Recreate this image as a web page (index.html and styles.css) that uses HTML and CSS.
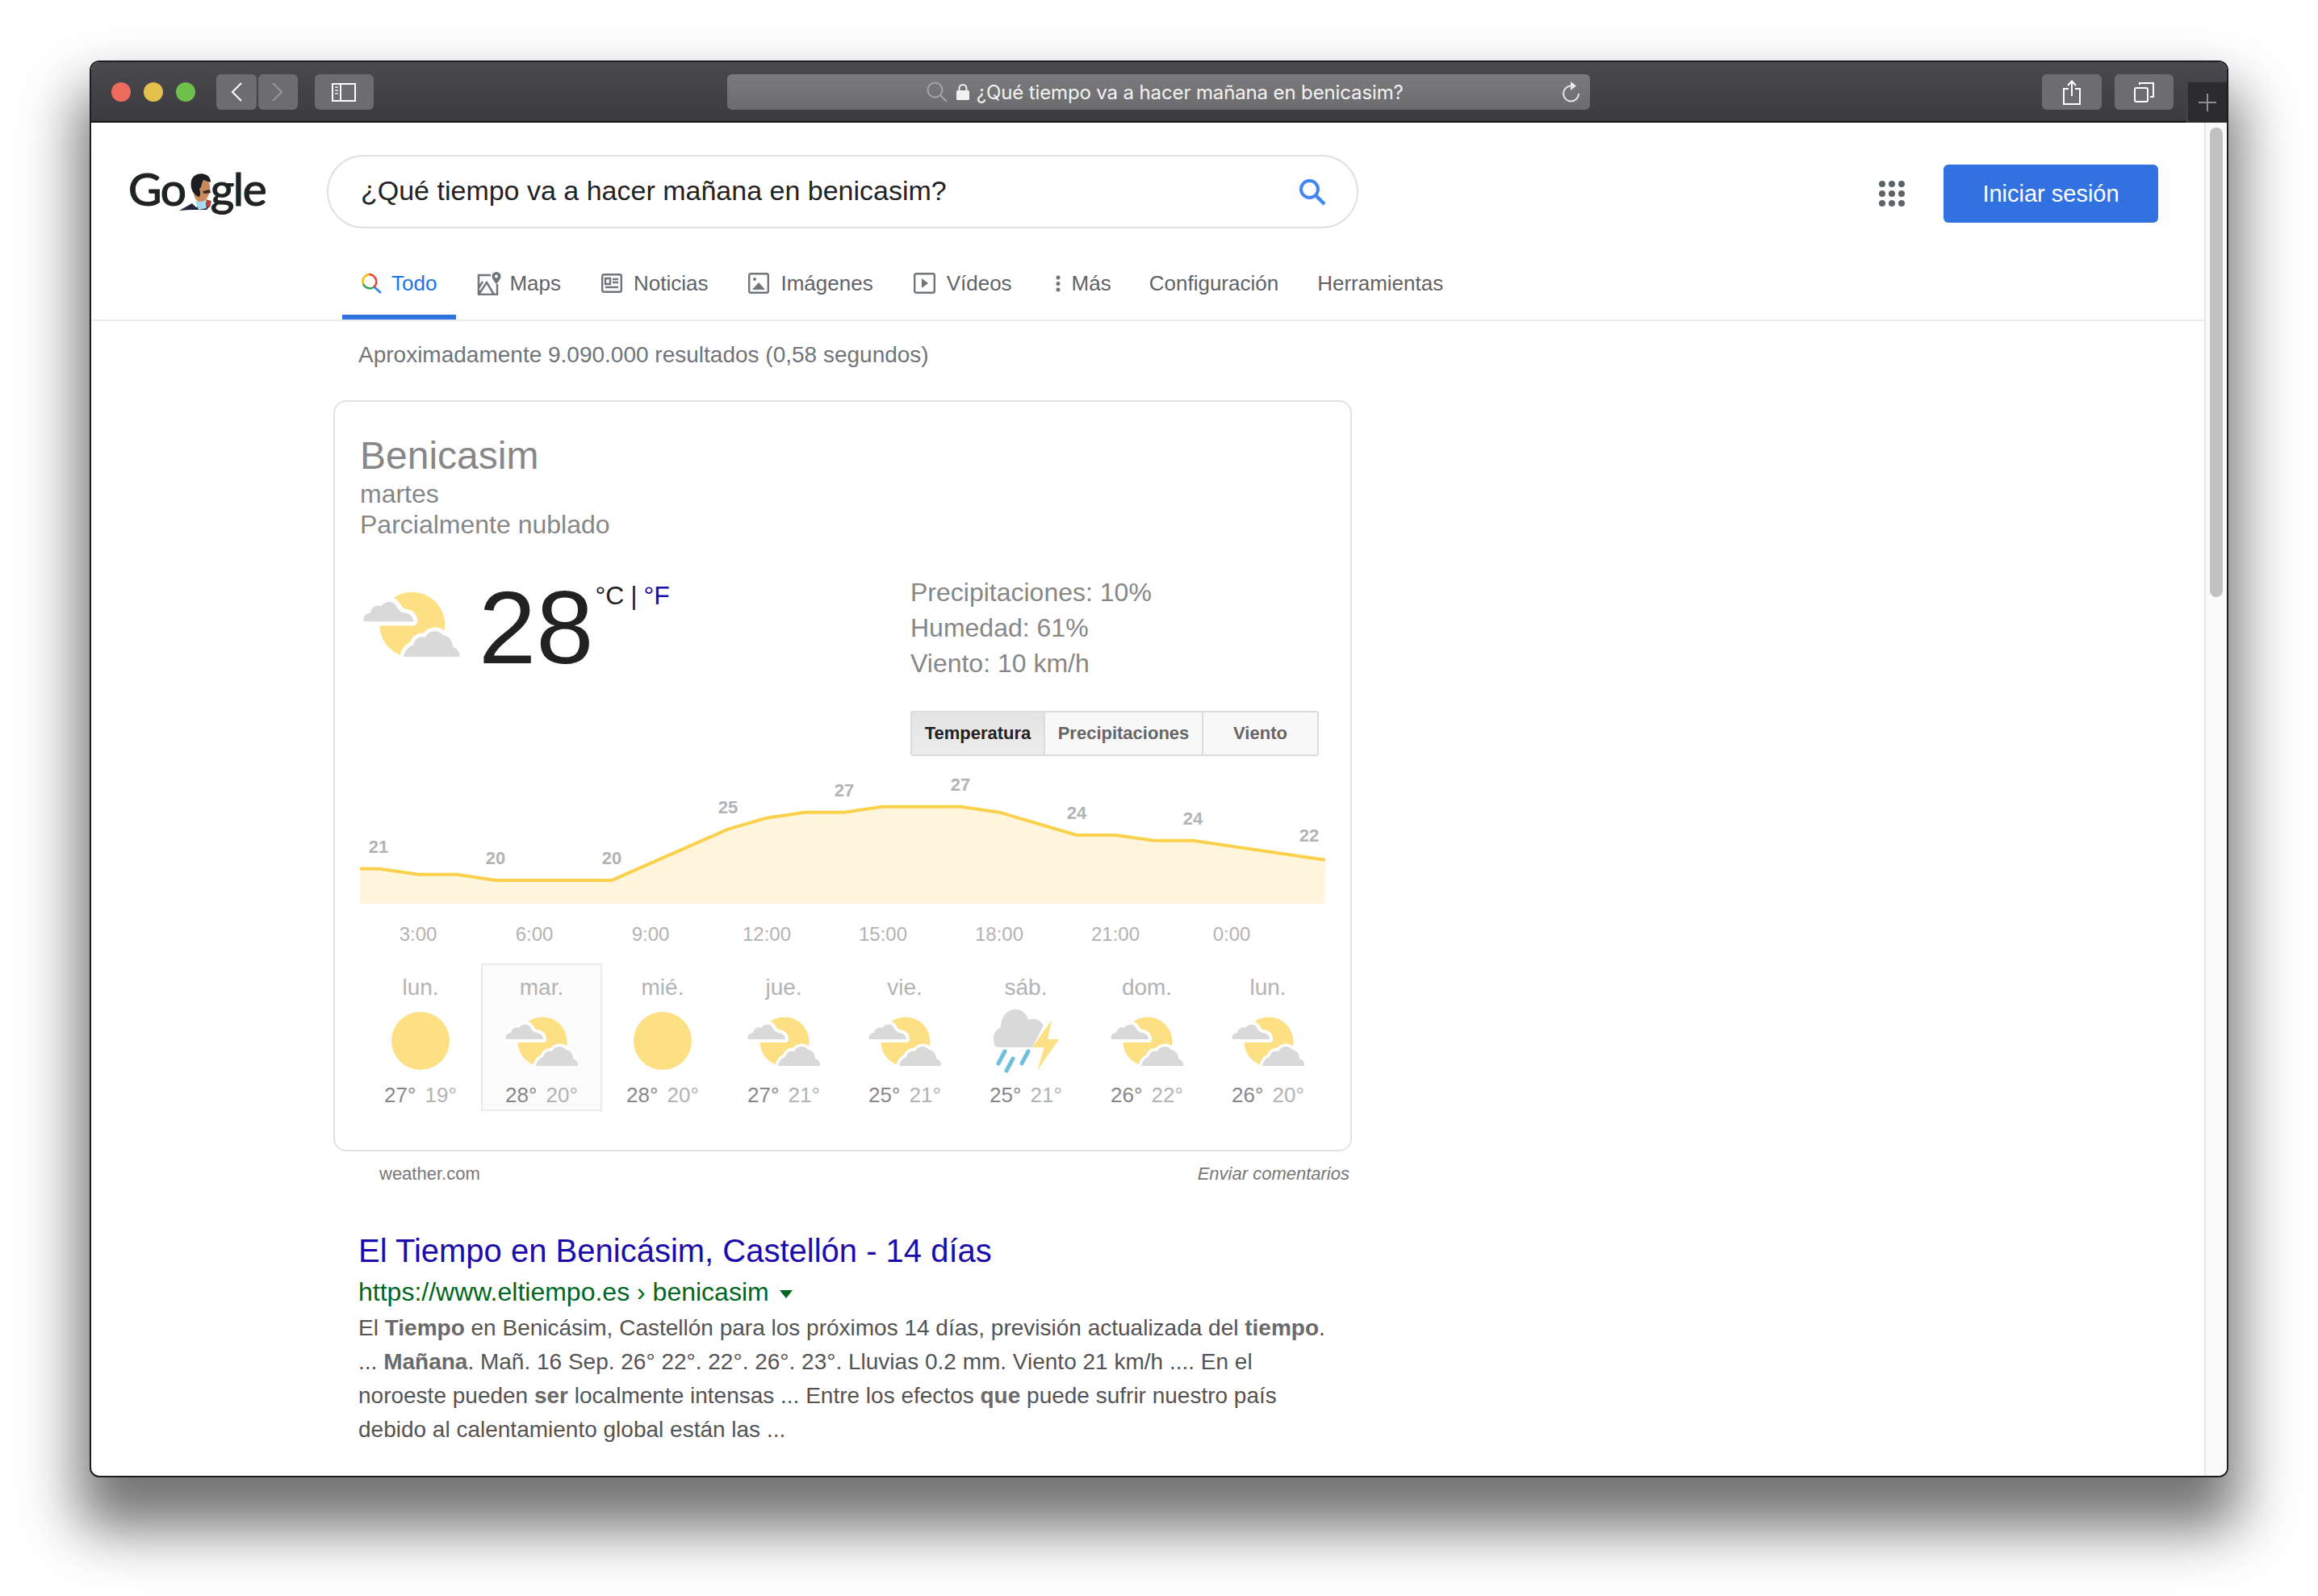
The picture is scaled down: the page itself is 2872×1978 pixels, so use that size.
FILE: index.html
```html
<!DOCTYPE html>
<html lang="es">
<head>
    <meta charset="UTF-8">
    <title>¿Qué tiempo va a hacer mañana en benicasim?</title>
    <link rel="stylesheet" href="styles.css">
</head>
<body>
    <svg class="defs" width="0" height="0">
        <symbol id="partly" viewBox="0 0 91 61">
            <circle cx="46" cy="31" r="30.5" fill="#fce083"/>
            <path d="M1 28C-1 24 3 20 7 20C8 14 14 12 17 14C20 9 28 8 31 13C33 17 35 19 38 20C43 20 47 23 47 28Z" fill="#d9d9d9" stroke="#fff" stroke-width="8" stroke-linejoin="round" paint-order="stroke"/>
            <path d="M38 61C39 55 43 51 47 50C48 44 54 41 58 43C61 36 71 35 75 41C80 41 84 46 84 52C88 53 91 57 90 61Z" fill="#d9d9d9" stroke="#fff" stroke-width="7" stroke-linejoin="round" paint-order="stroke"/>
        </symbol>
        <symbol id="storm" viewBox="0 0 81 79">
            <path d="M6 47C1 47 0 42 0 36C0 29 4 24 9 23C8 10 17 0 27 0C36 0 41 6 43 13C50 10 58 12 62 20L48 47Z" fill="#d9d9d9"/>
            <path d="M72 13L48 47H63L54 76L81 37H67Z" fill="#fce083"/>
            <path d="M14 52L6 67M24 61L16 76M43 52L35 67" stroke="#6cbfdc" stroke-width="5" stroke-linecap="round"/>
        </symbol>
    </svg>

    <div class="window">
        <div class="toolbar">
            <div class="lights">
                <span class="light red"></span>
                <span class="light yellow"></span>
                <span class="light green"></span>
            </div>
            <div class="tool back">
                <svg width="14" height="24" viewBox="0 0 14 24"><path d="M13 1L2 12L13 23" fill="none" stroke="#fff" stroke-width="2"/></svg>
            </div>
            <div class="tool forward">
                <svg width="14" height="24" viewBox="0 0 14 24"><path d="M1 1L12 12L1 23" fill="none" stroke="#98989c" stroke-width="2"/></svg>
            </div>
            <div class="tool sidebar">
                <svg width="30" height="23" viewBox="0 0 30 23"><path d="M1 1H29V22H1ZM11 1V22" fill="none" stroke="#fff" stroke-width="2"/><path d="M4 5H8M4 9H8M4 13H8" stroke="#cfcfcf" stroke-width="2"/></svg>
            </div>
            <div class="address">
                <svg width="26" height="26" viewBox="0 0 26 26"><circle cx="10.5" cy="10.5" r="9" fill="none" stroke="#a6a6a8" stroke-width="2"/><path d="M17 17L25 25" stroke="#a6a6a8" stroke-width="2"/></svg>
                <svg class="lock" width="16" height="20" viewBox="0 0 16 20"><path d="M3.5 9V5.5a4.5 4.5 0 0 1 9 0V9" fill="none" stroke="#f2f2f2" stroke-width="2"/><rect y="8" width="16" height="12" rx="1.5" fill="#f2f2f2"/></svg>
                <span class="address-text">¿Qué tiempo va a hacer mañana en benicasim?</span>
                <svg class="reload" width="24" height="28" viewBox="0 0 24 28"><path d="M11 6.500A9.500 9.500 0 1 0 21 16" fill="none" stroke="#e8e8e8" stroke-width="2"/><path d="M11 1L18 6.500L11 12Z" fill="#e8e8e8"/></svg>
            </div>
            <div class="tool share">
                <svg width="22" height="31" viewBox="0 0 22 31"><path d="M7 11H1V30H21V11H15" fill="none" stroke="#fff" stroke-width="2"/><path d="M11 20V2M6 7L11 1.500L16 7" fill="none" stroke="#fff" stroke-width="2"/></svg>
            </div>
            <div class="tool tabs-btn">
                <svg width="25" height="25" viewBox="0 0 25 25"><rect x="1" y="7" width="16" height="17" rx="2" fill="none" stroke="#fff" stroke-width="2"/><path d="M7 3V1H24V18H20" fill="none" stroke="#fff" stroke-width="2"/></svg>
            </div>
            <div class="new-tab">
                <svg width="22" height="22" viewBox="0 0 22 22"><path d="M11 0V22M0 11H22" stroke="#8f8f91" stroke-width="2"/></svg>
            </div>
        </div>

        <div class="viewport">
            <div class="page">
                <div class="header">
                    <div class="logo">Go<svg class="doodle" width="42" height="52" viewBox="0 0 42 52">
                        <path d="M0 47L16 38L21 43L34 37L39 40L34 46L14 46Z" fill="#23243a"/>
                        <path d="M20 36L32 32L34 44L24 46Z" fill="#a5dcec"/>
                        <path d="M33 33L40 35L38 43L34 42Z" fill="#b8413a"/>
                        <path d="M18 14C18 6 26 3 32 6C37 9 39 16 38 22C37 30 32 37 25 36C20 35 19 30 18 26Z" fill="#c88a5c"/>
                        <path d="M25 30C18 28 13 20 15 10C17 2 27 -1 34 3C38 5 39 9 39 12L30 9C27 14 28 18 25 20C26 24 27 27 25 30Z" fill="#1d1d24"/>
                        <path d="M29 23L38 21L39 25L31 26Z" fill="#3a2a24"/>
                    </svg>gle</div>
                    <div class="search-box">
                        <span class="search-text">¿Qué tiempo va a hacer mañana en benicasim?</span>
                        <svg width="34" height="34" viewBox="0 0 34 34"><circle cx="13.500" cy="13.500" r="10.500" fill="none" stroke="#4285f4" stroke-width="4"/><path d="M21 21L32 32" stroke="#4285f4" stroke-width="4.500"/></svg>
                    </div>
                    <div class="apps">
                        <i></i><i></i><i></i><i></i><i></i><i></i><i></i><i></i><i></i>
                    </div>
                    <div class="login">Iniciar sesión</div>
                </div>

                <div class="nav">
                    <div class="nav-item active">
                        <svg width="26" height="26" viewBox="0 0 26 26">
                            <path d="M3 14A9 9 0 0 1 10 2" fill="none" stroke="#fbbc05" stroke-width="2.500"/>
                            <path d="M10 2A9 9 0 0 1 19 9" fill="none" stroke="#ea4335" stroke-width="2.500"/>
                            <path d="M3 14A9 9 0 0 0 16 18" fill="none" stroke="#34a853" stroke-width="2.500"/>
                            <path d="M16 17L25 25" stroke="#4285f4" stroke-width="3"/>
                            <path d="M19 9A9 9 0 0 1 16 18" fill="none" stroke="#ea4335" stroke-width="2.500"/>
                        </svg>
                        Todo
                    </div>
                    <div class="nav-item maps">
                        <svg width="30" height="29" viewBox="0 0 30 29"><path d="M17 4H2V28H25V15M2 28L12 13L21 28M2 20L7 12" fill="none" stroke="#70757a" stroke-width="2.500"/><path d="M24 0a5.500 5.500 0 0 1 5.500 5.500C29.500 9 24 15 24 15S18.500 9 18.500 5.500A5.500 5.500 0 0 1 24 0Z" fill="#70757a"/><circle cx="24" cy="5.500" r="2" fill="#fff"/></svg>
                        Maps
                    </div>
                    <div class="nav-item">
                        <svg width="26" height="24" viewBox="0 0 26 24"><rect x="1.200" y="1.200" width="23.600" height="21.600" rx="2" fill="none" stroke="#70757a" stroke-width="2.400"/><path d="M5 6H11V13H5ZM14 7H21M14 11H21M5 17H21" fill="none" stroke="#70757a" stroke-width="2.400"/></svg>
                        Noticias
                    </div>
                    <div class="nav-item">
                        <svg width="26" height="26" viewBox="0 0 26 26"><rect x="1.200" y="1.200" width="23.600" height="23.600" rx="2" fill="none" stroke="#70757a" stroke-width="2.400"/><circle cx="8" cy="8" r="2" fill="#70757a"/><path d="M5 21L13 12L21 21Z" fill="#70757a"/></svg>
                        Imágenes
                    </div>
                    <div class="nav-item">
                        <svg width="27" height="26" viewBox="0 0 27 26"><rect x="1.200" y="1.200" width="24.600" height="23.600" rx="2" fill="none" stroke="#70757a" stroke-width="2.400"/><path d="M10 7L18 13L10 19Z" fill="#70757a"/></svg>
                        Vídeos
                    </div>
                    <div class="nav-item more">
                        <svg width="6" height="21" viewBox="0 0 6 21"><circle cx="3" cy="3" r="2.500" fill="#70757a"/><circle cx="3" cy="10.500" r="2.500" fill="#70757a"/><circle cx="3" cy="18" r="2.500" fill="#70757a"/></svg>
                        Más
                    </div>
                    <div class="nav-item config">Configuración</div>
                    <div class="nav-item tools">Herramientas</div>
                </div>

                <div class="results">
                    <div class="count">Aproximadamente 9.090.000 resultados (0,58 segundos)</div>

                    <div class="card">
                        <div class="city">Benicasim</div>
                        <div class="sub">martes</div>
                        <div class="sub">Parcialmente nublado</div>

                        <div class="current">
                            <div class="now">
                                <svg class="now-icon" width="122" height="81"><use href="#partly"/></svg>
                                <div class="temp">28</div>
                                <div class="units">°C | <span class="blue">°F</span></div>
                            </div>
                            <div class="details">
                                <div>Precipitaciones: 10%</div>
                                <div>Humedad: 61%</div>
                                <div>Viento: 10 km/h</div>
                            </div>
                        </div>

                        <div class="seg">
                            <div class="seg-btn selected">Temperatura</div>
                            <div class="seg-btn precip">Precipitaciones</div>
                            <div class="seg-btn wind">Viento</div>
                        </div>

                        <svg class="chart" width="1196" height="170" viewBox="0 0 1196 170">
                            <path d="M0 116.700L24 116.700L72 123.700L120 123.700L168 131L312 131L456 67.700L504 53.700L552 46.700L600 46.700L648 39.700L744 39.700L792 46.700L888 75L936 75L984 81.700L1032 81.700L1196 105.700V160H0Z" fill="#fef5dc"/>
                            <path d="M0 116.700L24 116.700L72 123.700L120 123.700L168 131L312 131L456 67.700L504 53.700L552 46.700L600 46.700L648 39.700L744 39.700L792 46.700L888 75L936 75L984 81.700L1032 81.700L1196 105.700" fill="none" stroke="#fbd14b" stroke-width="4"/>
                            <text class="chart-num" x="23" y="97">21</text>
                            <text class="chart-num" x="168" y="111">20</text>
                            <text class="chart-num" x="312" y="111">20</text>
                            <text class="chart-num" x="456" y="48">25</text>
                            <text class="chart-num" x="600" y="27">27</text>
                            <text class="chart-num" x="744" y="20">27</text>
                            <text class="chart-num" x="888" y="55">24</text>
                            <text class="chart-num" x="1032" y="62">24</text>
                            <text class="chart-num" x="1176" y="83">22</text>
                        </svg>

                        <div class="hours">
                            <span>3:00</span><span>6:00</span><span>9:00</span><span>12:00</span><span>15:00</span><span>18:00</span><span>21:00</span><span>0:00</span>
                        </div>

                        <div class="days">
                            <div class="day">
                                <div class="day-name">lun.</div>
                                <div class="day-icon"><div class="sun"></div></div>
                                <div class="day-temp">27° <span class="low">19°</span></div>
                            </div>
                            <div class="day today">
                                <div class="day-name">mar.</div>
                                <div class="day-icon"><svg width="91" height="61"><use href="#partly"/></svg></div>
                                <div class="day-temp">28° <span class="low">20°</span></div>
                            </div>
                            <div class="day">
                                <div class="day-name">mié.</div>
                                <div class="day-icon"><div class="sun"></div></div>
                                <div class="day-temp">28° <span class="low">20°</span></div>
                            </div>
                            <div class="day">
                                <div class="day-name">jue.</div>
                                <div class="day-icon"><svg width="91" height="61"><use href="#partly"/></svg></div>
                                <div class="day-temp">27° <span class="low">21°</span></div>
                            </div>
                            <div class="day">
                                <div class="day-name">vie.</div>
                                <div class="day-icon"><svg width="91" height="61"><use href="#partly"/></svg></div>
                                <div class="day-temp">25° <span class="low">21°</span></div>
                            </div>
                            <div class="day">
                                <div class="day-name">sáb.</div>
                                <div class="day-icon"><svg width="81" height="79"><use href="#storm"/></svg></div>
                                <div class="day-temp">25° <span class="low">21°</span></div>
                            </div>
                            <div class="day">
                                <div class="day-name">dom.</div>
                                <div class="day-icon"><svg width="91" height="61"><use href="#partly"/></svg></div>
                                <div class="day-temp">26° <span class="low">22°</span></div>
                            </div>
                            <div class="day">
                                <div class="day-name">lun.</div>
                                <div class="day-icon"><svg width="91" height="61"><use href="#partly"/></svg></div>
                                <div class="day-temp">26° <span class="low">20°</span></div>
                            </div>
                        </div>
                    </div>

                    <div class="sources">
                        <span>weather.com</span>
                        <em>Enviar comentarios</em>
                    </div>

                    <div class="result">
                        <div class="result-title">El Tiempo en Benicásim, Castellón - 14 días</div>
                        <div class="result-url">https://www.eltiempo.es › benicasim <span class="caret"></span></div>
                        <div class="snippet">
                            El <b>Tiempo</b> en Benicásim, Castellón para los próximos 14 días, previsión actualizada del <b>tiempo</b>.<br>
                            ... <b>Mañana</b>. Mañ. 16 Sep. 26° 22°. 22°. 26°. 23°. Lluvias 0.2 mm. Viento 21 km/h .... En el<br>
                            noroeste pueden <b>ser</b> localmente intensas ... Entre los efectos <b>que</b> puede sufrir nuestro país<br>
                            debido al calentamiento global están las ...
                        </div>
                    </div>
                </div>
            </div>
            <div class="scrollbar"><div class="thumb"></div></div>
        </div>
    </div>
</body>
</html>
```

FILE: styles.css
```css
* {
    box-sizing: border-box;
}
html, body {
    margin: 0;
    height: 100%;
}
body {
    padding: 75px 111px 0;
    background: #fff;
    font-family: "Liberation Sans", Arial, sans-serif;
    overflow: hidden;
}
.defs {
    display: block;
    height: 0;
}
.window {
    width: 2650px;
    height: 1756px;
    display: flex;
    flex-direction: column;
    border: 2px solid #1c1c1e;
    border-radius: 12px;
    overflow: hidden;
    background: #fff;
    box-shadow: 0 50px 70px 14px rgba(0, 0, 0, .55);
}

/* browser chrome */
.toolbar {
    height: 75px;
    flex: none;
    display: flex;
    align-items: flex-start;
    padding: 15px 0 0 25px;
    background: linear-gradient(#4a494e, #3c3b40);
    border-bottom: 2px solid #111;
}
.lights {
    display: flex;
    gap: 16px;
    margin: 10px 26px 0 0;
}
.light {
    width: 24px;
    height: 24px;
    border-radius: 50%;
}
.red { background: #ee6a5e; }
.yellow { background: #e2c04b; }
.green { background: #6fc04b; }
.tool {
    height: 44px;
    display: flex;
    align-items: center;
    justify-content: center;
    background: #6d6c71;
    border-radius: 6px;
}
.back { width: 50px; margin-right: 2px; }
.forward { width: 49px; margin-right: 21px; }
.sidebar { width: 73px; margin-right: 438px; }
.address {
    width: 1070px;
    height: 44px;
    display: flex;
    align-items: center;
    padding: 0 11px 0 247px;
    background: linear-gradient(#7b7b7e, #6c6c6f);
    border-radius: 6px;
    color: #f2f2f2;
    font-family: Inter, sans-serif;
    font-size: 24px;
    letter-spacing: -.13px;
}
.lock { margin-left: 11px; }
.address-text { margin-left: 9px; }
.reload { margin-left: auto; }
.share { width: 74px; margin-left: 560px; }
.tabs-btn { width: 73px; margin-left: 16px; }
.new-tab {
    width: 50px;
    height: 52px;
    margin: 8px 0 0 16px;
    display: flex;
    align-items: center;
    justify-content: center;
    background: #2c2c2e;
    border: 2px solid #424245;
    border-width: 2px 0 0 2px;
}

/* page */
.viewport {
    flex: 1;
    min-height: 0;
    display: flex;
}
.page {
    width: 2618px;
    flex: none;
    overflow: hidden;
}
.scrollbar {
    flex: 1;
    background: #fafafa;
    border-left: 2px solid #e8e8e8;
    padding: 6px 5px 0;
}
.thumb {
    height: 582px;
    background: #c1c1c1;
    border-radius: 8px;
}
.header {
    display: flex;
    align-items: flex-start;
    padding: 40px 57px 0 46px;
}
.logo {
    width: 176px;
    margin: 11px 0 0 0;
    display: flex;
    align-items: flex-start;
    font-family: Lato, sans-serif;
    font-size: 57px;
    font-weight: 400;
    line-height: 60px;
    letter-spacing: -1.5px;
    color: #222;
    -webkit-text-stroke: 1px #222;
    text-shadow: -1px 0 0 #9fdcec;
}
.doodle {
    margin: 11px -3px 0 -8px;
    flex: none;
}
.search-box {
    width: 1278px;
    height: 91px;
    margin-left: 70px;
    display: flex;
    align-items: center;
    justify-content: space-between;
    padding: 0 38px 0 40px;
    border: 2px solid #dfe1e5;
    border-radius: 46px;
    font-size: 34px;
    color: #222;
}
.search-text {
    margin-top: -3px;
}
.apps {
    width: 32px;
    margin: 32px 48px 0 auto;
    display: grid;
    grid-template-columns: repeat(3, 8px);
    gap: 4px;
}
.apps i {
    height: 8px;
    background: #5f6368;
    border-radius: 50%;
}
.login {
    width: 266px;
    height: 72px;
    margin-top: 12px;
    padding-top: 1px;
    display: flex;
    align-items: center;
    justify-content: center;
    background: #3272e0;
    border-radius: 6px;
    color: #fff;
    font-size: 29px;
}
.nav {
    height: 115px;
    display: flex;
    align-items: flex-start;
    gap: 50px;
    padding: 53px 0 0 334px;
    border-bottom: 2px solid #ebebeb;
    font-size: 26px;
    line-height: 30px;
    color: #5f6368;
}
.nav-item {
    display: flex;
    align-items: center;
    gap: 14px;
    position: relative;
}
.nav-item.active {
    gap: 12px;
    color: #1a73e8;
}
.nav-item.active::after {
    content: "";
    position: absolute;
    left: -23px;
    right: -24px;
    top: 54px;
    height: 6px;
    background: #3272e0;
}
.maps { gap: 10px; }
.more { margin-left: 4px; }
.config { margin-left: -3px; }
.tools { margin-left: -2px; }
.results {
    padding-left: 300px;
}
.count {
    margin: 26px 0 40px 31px;
    font-size: 28px;
    line-height: 32px;
    color: #70757a;
}

/* weather card */
.card {
    width: 1262px;
    height: 931px;
    padding: 43px 31px 0;
    border: 2px solid #dfe1e5;
    border-radius: 16px;
}
.city {
    font-size: 48px;
    line-height: 48px;
    margin-bottom: 4px;
    color: #878787;
}
.sub {
    font-size: 32px;
    line-height: 38px;
    color: #878787;
}
.current {
    display: flex;
    margin-top: 43px;
}
.now {
    width: 682px;
    display: flex;
    align-items: flex-start;
}
.now-icon {
    margin: 21px 22px 0 3px;
}
.temp {
    margin-top: 2px;
    font-size: 128px;
    line-height: 128px;
    color: #212121;
}
.units {
    margin: 7px 0 0 2px;
    font-size: 32px;
    line-height: 38px;
    word-spacing: -1px;
    color: #212121;
}
.blue {
    color: #1a0dab;
}
.details {
    font-size: 32px;
    line-height: 44px;
    color: #878787;
}
.seg {
    display: flex;
    width: 506px;
    height: 56px;
    margin: 37px 0 0 682px;
    border: 2px solid #dadce0;
    border-radius: 3px;
    background: #f8f8f8;
}
.seg-btn {
    display: flex;
    align-items: center;
    justify-content: center;
    font-size: 22px;
    font-weight: bold;
    color: #666;
    border-right: 2px solid #dadce0;
}
.seg-btn.selected {
    width: 165px;
    background: linear-gradient(#e4e4e4, #ececec);
    color: #222;
}
.precip { width: 196px; }
.wind { flex: 1; border-right: 0; }
.chart {
    display: block;
    margin-top: 23px;
}
.chart-num {
    font-size: 22px;
    font-weight: bold;
    fill: #b3b3b3;
    text-anchor: middle;
}
.hours {
    display: flex;
    margin-top: 14px;
    font-size: 24px;
    line-height: 28px;
    color: #b3b3b3;
}
.hours span {
    width: 144px;
    text-align: center;
}
.days {
    display: flex;
    margin-top: 22px;
}
.day {
    flex: none;
    width: 150px;
    height: 183px;
    padding-top: 12px;
    border: 2px solid transparent;
    text-align: center;
}
.day.today {
    background: #fbfbfb;
    border-color: #ebebeb;
}
.day-name {
    font-size: 28px;
    line-height: 32px;
    color: #b3b3b3;
}
.day-icon {
    height: 80px;
    margin: 10px 0 12px;
    display: flex;
    align-items: center;
    justify-content: center;
}
.sun {
    width: 72px;
    height: 72px;
    border-radius: 50%;
    background: #fce083;
}
.day-temp {
    font-size: 26px;
    line-height: 30px;
    color: #878787;
}
.low {
    margin-left: 4px;
    color: #b3b3b3;
}
.sources {
    width: 1262px;
    display: flex;
    justify-content: space-between;
    margin-top: 15px;
    padding: 0 3px 0 57px;
    font-size: 22px;
    line-height: 26px;
    color: #777;
}

/* search result */
.result {
    margin: 58px 0 0 31px;
}
.result-title {
    font-size: 40px;
    line-height: 48px;
    color: #1a0dab;
}
.result-url {
    margin-top: 8px;
    font-size: 32px;
    line-height: 38px;
    color: #006621;
}
.caret {
    display: inline-block;
    margin: 0 0 3px 4px;
    border-style: solid;
    border-width: 10px 8px 0;
    border-color: #006621 transparent transparent;
}
.snippet {
    margin-top: 5px;
    font-size: 28px;
    line-height: 42px;
    color: #545454;
    white-space: nowrap;
}
.snippet b {
    color: #6a6a6a;
}
```
